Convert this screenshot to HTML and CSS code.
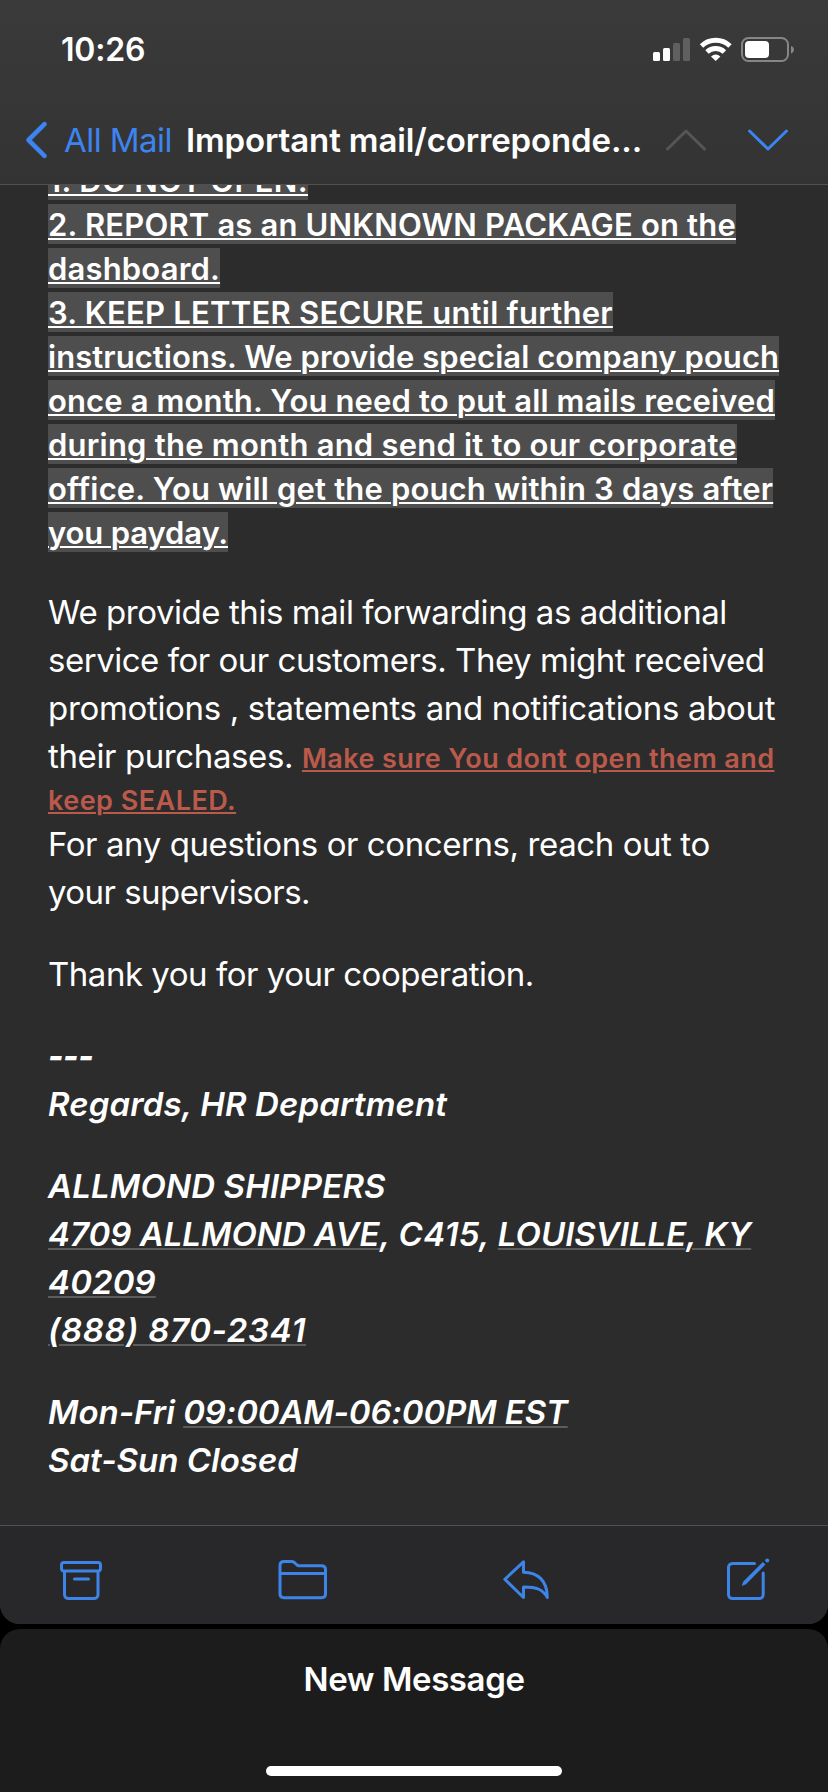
FILE: index.html
```html
<!DOCTYPE html>
<html lang="en">
<head>
<meta charset="utf-8">
<title>Mail</title>
<link rel="stylesheet" href="styles.css">
</head>
<body>
<div class="phone">
  <main class="screen">
    <header class="header">
      <div class="status">
        <span class="time">10:26</span>
        <svg class="status-icons" width="142" height="26" viewBox="0 0 142 26">
          <g fill="#fff"><rect x="0" y="15" width="7" height="9" rx="1.5"/><rect x="10" y="11" width="7" height="13" rx="1.5"/></g>
          <g fill="#606060"><rect x="20" y="6" width="7" height="18" rx="1.5"/><rect x="30" y="1" width="7" height="23" rx="1.5"/></g>
          <g transform="translate(47 0)">
            <path d="M1.5 9A20.5 20.5 0 0 1 30 9M7 15A12.5 12.5 0 0 1 24.4 15" fill="none" stroke="#fff" stroke-width="4.8"/>
            <path d="M11 19.5Q15.7 15.3 20.4 19.5L15.7 24Z" fill="#fff"/>
          </g>
          <rect x="89" y="1" width="46" height="23" rx="6.5" fill="none" stroke="#868687" stroke-width="2"/>
          <rect x="92" y="4" width="24" height="17" rx="4" fill="#fff"/>
          <path d="M138 9Q141 10 141 12.7T138 16.7Z" fill="#868687"/>
        </svg>
      </div>
      <nav class="nav">
        <svg class="back" width="24" height="40" viewBox="0 0 24 40"><path d="M20.5 4.2L4.5 20L20.5 35.8" fill="none" stroke="#3d84f0" stroke-width="4.6" stroke-linecap="round" stroke-linejoin="round"/></svg>
        <span class="mailbox">All Mail</span>
        <h1 class="title">Important mail/correponde...</h1>
        <svg class="prev" width="44" height="24" viewBox="0 0 44 24"><path d="M3.5 21L22 3L40.5 21" fill="none" stroke="#565656" stroke-width="3" stroke-linecap="round" stroke-linejoin="round"/></svg>
        <svg class="next" width="44" height="24" viewBox="0 0 44 24"><path d="M3.5 3L22 21L40.5 3" fill="none" stroke="#3d84f0" stroke-width="3" stroke-linecap="round" stroke-linejoin="round"/></svg>
      </nav>
    </header>
    <article class="mail">
      <div class="notice">
        <span class="mark track-34">1. DO NOT OPEN.</span>
        <span class="mark track-17">2. REPORT as an UNKNOWN PACKAGE on the</span>
        <span class="mark track-17">dashboard.</span>
        <span class="mark track-25">3. KEEP LETTER SECURE until further</span>
        <span class="mark track-6">instructions. We provide special company pouch</span>
        <span class="mark track-13">once a month. You need to put all mails received</span>
        <span class="mark track-22">during the month and send it to our corporate</span>
        <span class="mark track-16">office. You will get the pouch within 3 days after</span>
        <span class="mark tight-13">you payday.</span>
      </div>
      <div class="para">
        <p class="line"><span class="tight-44">We provide this mail forwarding as additional</span></p>
        <p class="line"><span class="tight-48">service for our customers. They might received</span></p>
        <p class="line"><span class="tight-33">promotions , statements and notifications about</span></p>
        <p class="line"><span class="tight-39">their purchases. </span><span class="warn">Make sure You dont open them and</span></p>
        <p class="line line-warn"><span class="warn track-47">keep SEALED.</span></p>
        <p class="line"><span class="tight-42">For any questions or concerns, reach out to</span></p>
        <p class="line"><span class="tight-55">your supervisors.</span></p>
      </div>
      <div class="para thanks"><p class="line"><span class="tight-48">Thank you for your cooperation.</span></p></div>
      <div class="signature">
        <p class="line dashes"><span class="tight-48">---</span></p>
        <p class="line"><span class="track-14">Regards, HR Department</span></p>
        <p class="line gap"><span class="track-16">ALLMOND SHIPPERS</span></p>
        <p class="line"><span class="data">4709 ALLMOND AVE</span><span class="track-34">, C415, </span><span class="data">LOUISVILLE, KY</span></p>
        <p class="line"><span class="data track-13">40209</span></p>
        <p class="line"><span class="data track-68">(888) 870-2341</span></p>
        <p class="line gap"><span>Mon-Fri </span><span class="data tight-13">09:00AM-06:00PM EST</span></p>
        <p class="line"><span>Sat-Sun Closed</span></p>
      </div>
    </article>
    <footer class="toolbar">
      <svg class="tool" viewBox="0 0 48 48"><rect x="4.5" y="6.5" width="39" height="8.5" rx="2.5"/><path d="M7.5 15.5V38.5a4 4 0 0 0 4 4H37a4 4 0 0 0 4-4V15.5M17.5 23H31.5"/></svg>
      <svg class="tool" viewBox="0 0 48 48"><path d="M1 38V9.5Q1 5.5 5 5.5H12.5Q14 5.5 15.3 6.5L18 9Q18.8 9.7 20 9.7H42.5Q46.5 9.7 46.5 13.7V38Q46.5 41.7 42.5 41.7H5Q1 41.7 1 38ZM1 17.5H46.5"/></svg>
      <svg class="tool" viewBox="0 0 48 48"><path d="M2.8 23.3L21.5 5.8V16.2C36 16.2 45.3 25 45.3 41.5C41 33.5 35 31 21.5 31V41.5Z"/></svg>
      <svg class="tool" viewBox="0 0 48 48"><path d="M30.5 7.5H8.5a4 4 0 0 0-4 4V38.5a4 4 0 0 0 4 4H35.2a4 4 0 0 0 4-4V17"/><path class="solid" d="M17.7 29.9L19.3 25.5L38.8 5.9L41.5 8.6L22 28.2Z"/><circle class="solid" cx="43.2" cy="4.4" r="2"/></svg>
    </footer>
  </main>
  <section class="sheet">
    <h2 class="sheet-title">New Message</h2>
    <div class="home"></div>
  </section>
</div>
</body>
</html>
```
FILE: styles.css
```css
* { box-sizing: border-box; }
body { margin: 0; background: #000; font-family: Inter, "Liberation Sans", sans-serif; color: #fff; }
h1, h2, p { margin: 0; font-size: inherit; font-weight: inherit; }
.phone { width: 828px; height: 1792px; display: flex; flex-direction: column; gap: 5px; overflow: hidden; background: #000; }

.screen { height: 1624px; display: flex; flex-direction: column; background: #2c2c2c; border-radius: 0 0 20px 20px; overflow: hidden; }
.header { height: 185px; flex: none; border-bottom: 1px solid #505050; background: linear-gradient(#3a3a3a, #333334); }
.status { height: 98px; display: flex; align-items: center; justify-content: space-between; padding: 2px 33px 0 61px; }
.time { font-size: 32px; line-height: 48px; font-weight: 600; letter-spacing: -0.2px; }
.status-icons { flex: none; }
.nav { height: 84px; display: flex; align-items: center; white-space: nowrap; font-size: 33px; line-height: 48px; padding-left: 24px; }
.nav svg { flex: none; }
.back { margin-right: 16px; }
.mailbox { width: 122px; flex: none; color: #3d84f0; letter-spacing: -0.55px; }
.title { width: 477px; flex: none; font-weight: 600; letter-spacing: -0.13px; }
.prev { margin-left: 1px; }
.next { margin-left: 38px; }

.mail { flex: 1; min-height: 0; overflow: hidden; padding-left: 48px; }
.notice { margin-top: -25px; display: flex; flex-direction: column; align-items: flex-start; gap: 4px; }
.mark { display: block; height: 40px; padding-top: 1px; line-height: 39px; font-size: 31px; font-weight: 600; background: #4e4e4e; white-space: nowrap; text-decoration: underline 2px; text-underline-offset: 2px; }
.para { margin-top: 36px; }
.line { height: 48px; line-height: 48px; font-size: 33px; white-space: pre; }
.warn { font-size: 27px; font-weight: 600; letter-spacing: 0.41px; color: #bb5a4b; text-decoration: underline 2px; text-underline-offset: 2px; }
.line-warn { height: 40px; padding-top: 1px; line-height: 39px; font-size: 27px; }
.thanks { margin-top: 34px; }
.signature { margin-top: 34px; font-weight: 600; font-style: italic; }
.dashes { font-weight: 800; }
.gap { margin-top: 34px; }
.data { text-decoration: underline 2px #5c5c5c; text-underline-offset: 2px; }

.track-6 { letter-spacing: 0.06px; }
.track-13 { letter-spacing: 0.13px; }
.track-14 { letter-spacing: 0.14px; }
.track-16 { letter-spacing: 0.16px; }
.track-17 { letter-spacing: 0.17px; }
.track-22 { letter-spacing: 0.22px; }
.track-25 { letter-spacing: 0.25px; }
.track-34 { letter-spacing: 0.34px; }
.track-47 { letter-spacing: 0.47px; }
.track-68 { letter-spacing: 0.68px; }
.tight-13 { letter-spacing: -0.13px; }
.tight-33 { letter-spacing: -0.33px; }
.tight-39 { letter-spacing: -0.39px; }
.tight-42 { letter-spacing: -0.42px; }
.tight-44 { letter-spacing: -0.44px; }
.tight-48 { letter-spacing: -0.48px; }
.tight-55 { letter-spacing: -0.55px; }

.toolbar { height: 99px; flex: none; border-top: 1px solid #505050; background: #28282a; display: flex; justify-content: space-between; padding: 30px 56px 0 57px; }
.tool { width: 48px; height: 48px; overflow: visible; fill: none; stroke: #3d84e8; stroke-width: 3; stroke-linecap: round; stroke-linejoin: round; }
.tool .solid { fill: #3d84e8; stroke: none; }

.sheet { height: 163px; flex: none; background: #1c1c1c; border-radius: 20px 20px 0 0; display: flex; flex-direction: column; align-items: center; justify-content: space-between; padding: 26px 0 16px; }
.sheet-title { font-size: 33px; line-height: 48px; font-weight: 600; letter-spacing: -0.4px; }
.home { width: 296px; height: 10px; border-radius: 5px; background: #fff; }
```
